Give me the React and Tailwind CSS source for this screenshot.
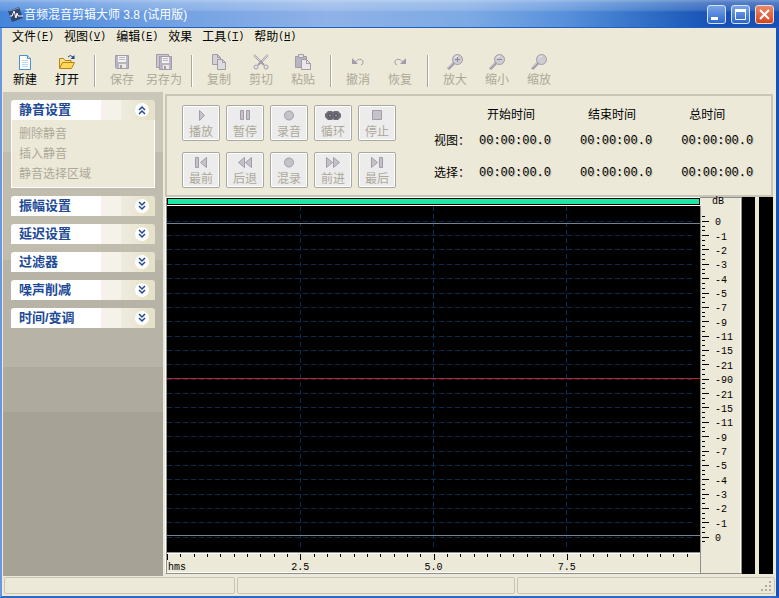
import React, { useState } from "react";

const cjk = "font-['Liberation_Sans','Noto_Sans_CJK_SC',sans-serif]";
const mono = "font-['Liberation_Mono','Noto_Sans_CJK_SC',monospace]";

const menus = [
  { name: "文件", hotkey: "F" },
  { name: "视图", hotkey: "V" },
  { name: "编辑", hotkey: "E" },
  { name: "效果" },
  { name: "工具", hotkey: "T" },
  { name: "帮助", hotkey: "H" },
];

// Toolbar groups, a separator is drawn between them
const toolGroups = [
  [
    { label: "新建", icon: "new", enabled: true },
    { label: "打开", icon: "open", enabled: true },
  ],
  [
    { label: "保存", icon: "save" },
    { label: "另存为", icon: "saveAs" },
  ],
  [
    { label: "复制", icon: "copy" },
    { label: "剪切", icon: "cut" },
    { label: "粘贴", icon: "paste" },
  ],
  [
    { label: "撤消", icon: "undo" },
    { label: "恢复", icon: "redo" },
  ],
  [
    { label: "放大", icon: "zoomIn" },
    { label: "缩小", icon: "zoomOut" },
    { label: "缩放", icon: "zoom" },
  ],
];

const sections = [
  { title: "静音设置", items: ["删除静音", "插入静音", "静音选择区域"] },
  { title: "振幅设置", items: [] },
  { title: "延迟设置", items: [] },
  { title: "过滤器", items: [] },
  { title: "噪声削减", items: [] },
  { title: "时间/变调", items: [] },
];

const transport = [
  { label: "播放", icon: "play" },
  { label: "暂停", icon: "pause" },
  { label: "录音", icon: "record" },
  { label: "循环", icon: "loop" },
  { label: "停止", icon: "stop" },
  { label: "最前", icon: "first" },
  { label: "后退", icon: "rewind" },
  { label: "混录", icon: "record" },
  { label: "前进", icon: "forward" },
  { label: "最后", icon: "last" },
];

const times = ["视图：", "选择："];

const decibels = [
  "0", "-1", "-2", "-3", "-4", "-5", "-7", "-9", "-11", "-15", "-21", "-90",
  "-21", "-15", "-11", "-9", "-7", "-5", "-4", "-3", "-2", "-1", "0",
];

// Vertical position of a dB step, shared by the wave view and its scale
const stepY = (step) => `${4.4 + step * 4.151}%`;

const magnifier = (
  <>
    <path d="M1 15l6-6" stroke="#a39bab" strokeWidth="3" />
    <path d="M1 14l5-5" stroke="#cbc7cf" />
    <circle cx="10.500" cy="5.500" r="5" fill="#cdcdd0" stroke="#a39bab" />
    <path d="M8 4q1-2 3-2" stroke="#f4f4f4" fill="none" />
  </>
);

const toolIcons = {
  new: (
    <>
      <path d="M2.500 1.500h8l3 3v11h-11z" fill="#fff" stroke="#4b8fcb" />
      <path d="M10.500 1.500v3h3" fill="#cfe4f8" stroke="#4b8fcb" />
      <path d="M5 6.500h6M5 8.500h6M5 10.500h6M5 12.500h6" stroke="#bcd9f4" />
    </>
  ),
  open: (
    <>
      <path d="M.5 14.500v-10h4l1.500 2h6v3" fill="#ffe07a" stroke="#b98012" />
      <path d="M.5 14.500l3-6h12l-3 6z" fill="#ffd95c" stroke="#b98012" />
      <path d="M9 3q2-3 5 0" fill="none" stroke="#1c4690" />
      <path d="M15.500 1v4h-4z" fill="#1c4690" />
    </>
  ),
  save: (
    <>
      <path d="M1.500 1.500h13v13h-12l-1-1z" fill="#b9b5be" stroke="#a39bab" />
      <path d="M4 2h8v6H4z" fill="#f3f3f1" />
      <path d="M5 3.500h6M5 5.500h6" stroke="#b9b5be" />
      <path d="M5 10h7v4H5z" fill="#eceae6" />
      <path d="M6 11h2v3H6z" fill="#a39bab" />
    </>
  ),
  saveAs: (
    <>
      <path d="M.5.5h12v13h-12z" fill="#cbc7cf" stroke="#a39bab" />
      <path d="M3.500 2.500h12v13h-12z" fill="#b9b5be" stroke="#a39bab" />
      <path d="M6 3h7v6H6z" fill="#f3f3f1" />
      <path d="M7 4.500h5M7 6.500h5" stroke="#b9b5be" />
      <path d="M7 11h6v4H7z" fill="#eceae6" />
      <path d="M8 12h2v3H8z" fill="#a39bab" />
    </>
  ),
  copy: (
    <>
      <path d="M1.500.5h5l3 3v7h-8z" fill="#d3d1d3" stroke="#a39bab" />
      <path d="M6.500 5.500h5l3 3v7h-8z" fill="#deddde" stroke="#a39bab" />
      <path d="M6.500.5v3h3M11.500 5.500v3h3" fill="none" stroke="#a39bab" />
    </>
  ),
  cut: (
    <>
      <path d="M1 1l10 10M15 1L5 11" stroke="#a39bab" strokeWidth="2" />
      <path d="M1 1l6 6M15 1L9 7" stroke="#deddde" />
      <circle cx="3" cy="13" r="2" fill="none" stroke="#a39bab" />
      <circle cx="13" cy="13" r="2" fill="none" stroke="#a39bab" />
    </>
  ),
  paste: (
    <>
      <path d="M.5 2.500h11v11H.5z" fill="#b9b5be" stroke="#a39bab" />
      <path d="M3.500.5h5v3h-5z" fill="#e4e3e2" stroke="#a39bab" />
      <path d="M6.500 5.500h5l4 4v6h-9z" fill="#e9e8e6" stroke="#a39bab" />
      <path d="M11.500 5.500v4h4" fill="none" stroke="#a39bab" />
    </>
  ),
  undo: (
    <>
      <path d="M5 8q5-5 8-1 1 3-2 4" fill="none" stroke="#a39bab" />
      <path d="M2 4v6h6z" fill="#a39bab" />
    </>
  ),
  redo: (
    <>
      <path d="M11 8Q6 3 3 7q-1 3 2 4" fill="none" stroke="#a39bab" />
      <path d="M14 4v6H8z" fill="#a39bab" />
    </>
  ),
  zoomIn: (
    <>
      {magnifier}
      <path d="M8 5.500h5M10.500 3v5" stroke="#8f8799" />
    </>
  ),
  zoomOut: (
    <>
      {magnifier}
      <path d="M8 5.500h5" stroke="#8f8799" />
    </>
  ),
  zoom: magnifier,
};

const transportIcons = {
  play: <path d="M6.500 2.500v10l5-5z" />,
  pause: <path d="M3.500 2.500h3v9h-3zM9.500 2.500h3v9h-3z" />,
  record: <circle cx="8" cy="7.500" r="4.500" />,
  loop: (
    <>
      <path d="M3 3h4l1 1 1-1h4l3 3v3l-3 3H9l-1-1-1 1H3L0 9V6z" fill="#6d6b74" stroke="none" />
      <path d="M4 6h2v3H4zM10 6h2v3h-2z" fill="#ececec" stroke="#44424e" />
    </>
  ),
  stop: <path d="M3.500 2.500h9v9h-9z" />,
  first: <path d="M2.500 2.500h3v10h-3zM13.500 2.500v10l-6-5z" />,
  rewind: <path d="M7.500 2.500v10l-6-5zM14.500 2.500v10l-6-5z" />,
  forward: <path d="M1.500 2.500v10l6-5zM8.500 2.500v10l6-5z" />,
  last: <path d="M2.500 2.500v10l6-5zM10.500 2.500h3v10h-3z" />,
};

const TitleBar = () => (
  <header className="flex h-7 items-center border-b border-[#1e5fc0] bg-[linear-gradient(180deg,rgba(255,255,255,0.4)_0px,rgba(255,255,255,0.25)_3px,rgba(255,255,255,0.15)_10px,transparent_12px),linear-gradient(90deg,#4484da_0%,#6f9fe2_20%,#8fb2e8_42%,#7daae4_60%,#5a91dc_72%,#2d6cc4_84%,#1650b4_92%,#1650b4_100%)] pt-[2px] pr-[5px] pl-2">
    <svg width="16" height="16" viewBox="0 0 16 16">
      <path d="M0 4l11-4 4 11-11 4z" fill="#33476f" />
      <path d="M1 4l10-3" stroke="#7f93bb" />
      <path d="M2 9h2l2-5 2 7 1-5 1 3h5" fill="none" stroke="#fff" />
    </svg>
    <h1 className="flex-1 text-xs whitespace-pre text-white">
      音频混音剪辑大师 3.8 (试用版)
    </h1>
    <div className="flex gap-[5px]">
      <button
        aria-label="最小化"
        className="flex size-[19px] items-center justify-center rounded-[3px] border border-[#d5e2f7] bg-linear-to-b from-[#7ba5e6] to-[#2c66cc]"
      >
        <svg width="13" height="13">
          <path d="M1 9h7v3H1z" fill="#fff" />
        </svg>
      </button>
      <button
        aria-label="最大化"
        className="flex size-[19px] items-center justify-center rounded-[3px] border border-[#d5e2f7] bg-linear-to-b from-[#7ba5e6] to-[#2c66cc]"
      >
        <svg width="13" height="13">
          <path d="M1.500 1.500h10v10h-10z" fill="none" stroke="#fff" />
          <path d="M1 1h11v3H1z" fill="#fff" />
        </svg>
      </button>
      <button
        aria-label="关闭"
        className="flex size-[19px] items-center justify-center rounded-[3px] border border-[#f5d8cf] bg-linear-to-b from-[#e98a6c] to-[#d4421a]"
      >
        <svg width="13" height="13">
          <path d="M2 2l9 9M11 2l-9 9" stroke="#fff" strokeWidth="2" />
        </svg>
      </button>
    </div>
  </header>
);

const Toolbar = () => (
  <div className="flex h-[46px] items-center pt-1 pl-px">
    {toolGroups.map((group, index) => (
      <React.Fragment key={index}>
        {index > 0 && (
          <div className="mr-[5px] ml-[6px] h-8 w-[2px] border-r border-l border-r-white border-l-[#aca899]" />
        )}
        {group.map((tool) => (
          <button
            key={tool.label}
            disabled={!tool.enabled}
            className="flex w-[42px] flex-col items-center gap-[2px] text-black disabled:text-[#aca899]"
          >
            <svg width="16" height="16" viewBox="0 0 16 16" fill="none">
              {toolIcons[tool.icon]}
            </svg>
            <span className="text-xs leading-4">{tool.label}</span>
          </button>
        ))}
      </React.Fragment>
    ))}
  </div>
);

const Section = ({ section, open, onToggle }) => (
  <section>
    <button
      aria-expanded={open}
      onClick={onToggle}
      className="flex h-5 w-full items-center justify-between rounded-t-[3px] bg-[linear-gradient(90deg,#fff_90px,#fdeeee_90px,#fdeeee_93px,#f5f2ea_93px,#f5f2ea_110px,#efecdf_110px,#ebe7d6_125px,#e6e1c9_137px)] pr-[6px] pl-2 text-[#214a96]"
    >
      <span className="text-[13px] leading-5 font-bold">{section.title}</span>
      <svg width="14" height="14" viewBox="0 0 14 14">
        <circle cx="7" cy="7" r="7" fill="#fff" />
        <path
          d={open ? "M4 7l3-3 3 3M4 11l3-3 3 3" : "M4 3l3 3 3-3M4 7l3 3 3-3"}
          fill="none"
          stroke="#214a96"
          strokeWidth="1.500"
        />
      </svg>
    </button>
    {open && section.items.length > 0 && (
      <ul className="border border-t-0 border-white bg-[#ece9d8] px-[7px] pt-1 pb-[3px]">
        {section.items.map((item) => (
          <li key={item} className="flex">
            <button disabled className="text-xs leading-5 text-[#aca899]">
              {item}
            </button>
          </li>
        ))}
      </ul>
    )}
  </section>
);

const Controls = () => (
  <div className="flex items-start border-2 border-[#c9c6b8] pt-[9px] pb-[6px] pl-[15px]">
    <div className="grid grid-cols-5 gap-x-[6px] gap-y-[11px]">
      {transport.map((control) => (
        <button
          key={control.label}
          disabled
          className="flex h-9 w-[38px] flex-col items-center gap-px rounded-[2px] border border-[#a9a8a2] bg-[#ececec] pt-[2px] text-[#aca899] inset-ring inset-ring-white"
        >
          <svg
            width="16"
            height="15"
            viewBox="0 0 16 15"
            fill="#c5c3c8"
            stroke="#a39bab"
          >
            {transportIcons[control.icon]}
          </svg>
          <span className="text-xs leading-4">{control.label}</span>
        </button>
      ))}
    </div>
    <table className="ml-[38px] flex-1 table-fixed text-left text-xs">
      <thead>
        <tr className="h-5">
          <td className="w-[45px]" />
          <th className="w-[30%] pl-2 font-normal">开始时间</th>
          <th className="w-[30%] pl-2 font-normal">结束时间</th>
          <th className="pl-2 font-normal">总时间</th>
        </tr>
      </thead>
      <tbody>
        {times.map((name) => (
          <tr key={name} className="h-8">
            <th className="font-normal whitespace-nowrap">{name}</th>
            {[0, 1, 2].map((column) => (
              <td
                key={column}
                className={`${mono} [text-shadow:1px_1px_0_#c4c0ad]`}
              >
                00:00:00.0
              </td>
            ))}
          </tr>
        ))}
      </tbody>
    </table>
  </div>
);

const WaveView = () => (
  <svg
    className="min-h-[240px] w-full flex-1 bg-black"
    shapeRendering="crispEdges"
  >
    {decibels.map((_, step) => (
      <line
        key={step}
        x1="0"
        x2="98.500%"
        y1={stepY(step)}
        y2={stepY(step)}
        stroke="#0a2c52"
        strokeDasharray="5 3"
      />
    ))}
    {["25%", "50%", "75%"].map((x) => (
      <line
        key={x}
        x1={x}
        x2={x}
        y1="0"
        y2="98.500%"
        stroke="#0a2c52"
        strokeDasharray="5 3"
      />
    ))}
    <line x1="0" x2="100%" y1="5%" y2="5%" stroke="#75838f" />
    <line x1="0" x2="100%" y1="95.200%" y2="95.200%" stroke="#75838f" />
    <line x1="0" x2="100%" y1="49.800%" y2="49.800%" stroke="#c0202a" />
  </svg>
);

const TimeRuler = () => (
  <svg className="h-[18px] w-full" shapeRendering="crispEdges">
    {Array.from({ length: 40 }, (_, tick) => (
      <line
        key={tick}
        x1={`${tick * 2.5 + 0.1}%`}
        x2={`${tick * 2.5 + 0.1}%`}
        y1="0"
        y2={tick % 10 === 0 ? 6 : 3}
        stroke="#000"
      />
    ))}
    <g className={`${mono} text-[10px]`}>
      <text x="1" y="16">
        hms
      </text>
      {["2.5", "5.0", "7.5"].map((second, index) => (
        <text
          key={second}
          x={`${(index + 1) * 25}%`}
          y="16"
          textAnchor="middle"
        >
          {second}
        </text>
      ))}
    </g>
  </svg>
);

const DecibelScale = () => (
  <div className="flex w-[42px] flex-col border-t border-r border-[#8f8f8f] inset-shadow-[-1px_0_0_#fff]">
    <span className={`${mono} pl-3 text-[10px] leading-[8px]`}>dB</span>
    <div className="flex flex-1 flex-col border-l border-[#8f8f8f]">
      <svg className="w-full flex-1" shapeRendering="crispEdges">
        {Array.from({ length: 69 }, (_, tick) => (
          <line
            key={tick}
            x1="1"
            x2={(tick - 1) % 3 === 0 ? 8 : 4}
            y1={stepY((tick - 1) / 3)}
            y2={stepY((tick - 1) / 3)}
            stroke="#000"
          />
        ))}
        <g className={`${mono} text-[10px]`}>
          {decibels.map((value, step) => (
            <text key={step} x="14" y={stepY(step)} dy="4">
              {value}
            </text>
          ))}
        </g>
      </svg>
      <div className="h-[21px]" />
    </div>
  </div>
);

const StatusBar = () => (
  <footer className="flex h-5 gap-[2px] px-px pt-px pb-[2px]">
    <div className="w-[30%] rounded-[2px] border border-[#c9c6b6]" />
    <div className="w-[36%] rounded-[2px] border border-[#c9c6b6]" />
    <div className="flex flex-1 items-end justify-end rounded-[2px] border border-[#c9c6b6] pr-[2px] pb-px">
      <svg width="11" height="11" fill="#b3af9f">
        <path d="M8 0h2v2H8zM4 4h2v2H4zM8 4h2v2H8zM0 8h2v2H0zM4 8h2v2H4zM8 8h2v2H8z" />
      </svg>
    </div>
  </footer>
);

const App = () => {
  // Titles of the expanded side panel sections
  const [opened, setOpened] = useState(["静音设置"]);

  const toggle = (title) => {
    setOpened(
      opened.includes(title)
        ? opened.filter((name) => name !== title)
        : [...opened, title],
    );
  };

  return (
    <div className={`${cjk} flex min-h-screen flex-col bg-[#ece9d8] text-black`}>
      <TitleBar />
      <div className="flex flex-1 flex-col border-r-3 border-b-2 border-l-2 border-r-[#1853b4] border-b-[#2c68c6] border-l-[#6b96e0] pl-px">
        <nav className="flex h-[18px] items-center gap-[10px] pl-[9px]">
          {menus.map((menu) => (
            <button key={menu.name} className="flex items-center text-xs">
              {menu.name}
              {menu.hotkey && (
                <span className={`${mono} text-[10px]`}>
                  (<u>{menu.hotkey}</u>)
                </span>
              )}
            </button>
          ))}
        </nav>
        <Toolbar />
        <div className="flex flex-1">
          <aside className="flex w-40 flex-col gap-2 bg-[linear-gradient(180deg,#c9c6ba_60px,#c0bdaf_60px,#c0bdaf_168px,#b7b3a6_168px,#b7b3a6_275px,#aeab9e_275px,#aeab9e_320px,#a6a396_320px)] p-2">
            {sections.map((section) => (
              <Section
                key={section.title}
                section={section}
                open={opened.includes(section.title)}
                onToggle={() => toggle(section.title)}
              />
            ))}
          </aside>
          <main className="flex flex-1 flex-col pt-[2px] pr-[3px] pb-[2px] pl-[2px]">
            <Controls />
            <div className="flex flex-1">
              <div className="flex flex-1 border-b border-l border-b-[#8f8f8f] border-l-white">
                <div className="flex flex-1 flex-col border-t border-l border-t-white border-l-[#8f8f8f]">
                  <div className="h-[7px] border border-black bg-[#1fe8a5]" />
                  <div className="h-px bg-white" />
                  <WaveView />
                  <div className="h-[2px] border-t border-[#8f8f8f] bg-white" />
                  <TimeRuler />
                  <div className="h-px bg-white" />
                </div>
                <DecibelScale />
              </div>
              <div className="w-[13px] bg-black" />
              <div className="w-1" />
              <div className="w-[14px] bg-black" />
            </div>
          </main>
        </div>
        <StatusBar />
      </div>
    </div>
  );
};

export default App;
